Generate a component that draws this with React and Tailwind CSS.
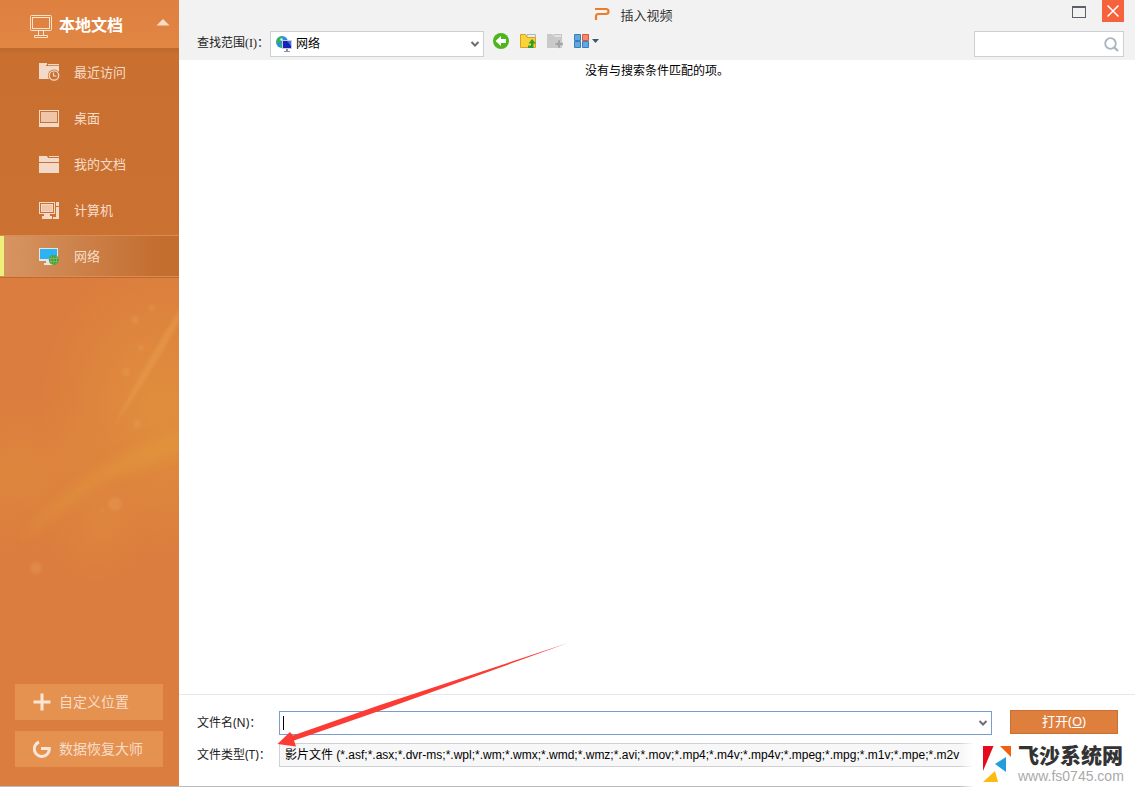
import React, { useState } from 'react'

const places = [
    { id: 'recent', name: '最近访问', Icon: RecentIcon },
    { id: 'desktop', name: '桌面', Icon: DesktopIcon },
    { id: 'docs', name: '我的文档', Icon: FolderIcon },
    { id: 'computer', name: '计算机', Icon: ComputerIcon },
    { id: 'network', name: '网络', Icon: NetworkIcon },
]

const movieTypes = '影片文件 (*.asf;*.asx;*.dvr-ms;*.wpl;*.wm;*.wmx;*.wmd;*.wmz;*.avi;*.mov;*.mp4;*.m4v;*.mp4v;*.mpeg;*.mpg;*.m1v;*.mpe;*.m2v'

function RecentIcon() {
    return (
        <svg width="22" height="20" viewBox="0 0 22 20" fill="#f3d9c8">
            <path d="M0 1h8v2h-1v14H0z" />
            <path d="M9 2h11v1.2H9zM7 4h13v6H10v7H5V4z" />
            <circle cx="15" cy="13.5" r="6" fill="#c97030" />
            <circle cx="15" cy="13.5" r="4.7" fill="none" stroke="#f3d9c8" strokeWidth="1.3" />
            <path d="M14.5 10.5v3.5h3" fill="none" stroke="#f3d9c8" strokeWidth="1.2" />
        </svg>
    )
}

function DesktopIcon() {
    return (
        <svg width="22" height="20" viewBox="0 0 22 20">
            <rect x="0.5" y="2.5" width="19" height="15" fill="none" stroke="#f3d9c8" />
            <rect x="2" y="4" width="16" height="10" fill="#f0c5a8" />
            <path d="M0 15h20v4H0z" fill="#f3d9c8" />
        </svg>
    )
}

function FolderIcon() {
    return (
        <svg width="22" height="20" viewBox="0 0 22 20" fill="#f3d9c8">
            <path d="M0 2h8l1 2h11v4H0zM10 2h10v1H10zM0 9h20v10H0z" />
        </svg>
    )
}

function ComputerIcon() {
    return (
        <svg width="22" height="20" viewBox="0 0 22 20" fill="#f3d9c8">
            <path d="M0 2h16v12H0zM17 2h3v4h-3zM17 7h3v12h-6v-2h3zM5 14h6v2h2v3H3v-3h2z" />
            <rect x="1.5" y="3.5" width="13" height="9" fill="none" stroke="#c97030" />
            <rect x="3" y="5" width="10" height="6" fill="#f0c5a8" />
        </svg>
    )
}

function NetworkIcon() {
    return (
        <svg width="22" height="20" viewBox="0 0 22 20">
            <path d="M0 2h19v13H0z" fill="#e8e4df" />
            <path d="M1 3h17v10H1z" fill="#2bb3f3" />
            <path d="M7 15h5v2h2v2H5v-2h2z" fill="#e8e4df" />
            <circle cx="14.8" cy="14" r="5" fill="#3f9b3a" />
            <path d="M10 12.5h9.6M10 15.5h9.6M14.8 9v10M12.5 10q-1.4 4 0 8M17 10q1.4 4 0 8" fill="none" stroke="#8fc06a" strokeWidth="0.7" />
        </svg>
    )
}

function ChevronIcon({ className }) {
    return (
        <svg className={className} width="10" height="8" viewBox="0 0 10 8">
            <path d="M1.5 2L5 5.5 8.500 2" fill="none" stroke="#6b6e75" strokeWidth="2" />
        </svg>
    )
}

// soft light streaks behind the lower part of the sidebar
function Streaks() {
    return (
        <svg className="pointer-events-none absolute left-0 top-[278px] h-[400px] w-full" viewBox="0 0 179 400" preserveAspectRatio="none">
            <defs>
                <radialGradient id="glow">
                    <stop offset="0" stopColor="#e3983c" stopOpacity="0.65" />
                    <stop offset="1" stopColor="#e3983c" stopOpacity="0" />
                </radialGradient>
                <filter id="soft" x="-20%" y="-20%" width="140%" height="140%">
                    <feGaussianBlur stdDeviation="6" />
                </filter>
                <filter id="soft1">
                    <feGaussianBlur stdDeviation="1.5" />
                </filter>
            </defs>
            <ellipse cx="160" cy="130" rx="120" ry="150" fill="url(#glow)" />
            <ellipse cx="20" cy="195" rx="100" ry="80" fill="url(#glow)" opacity="0.5" />
            <ellipse cx="97" cy="255" rx="50" ry="50" fill="url(#glow)" opacity="0.4" />
            <path d="M190 150Q90 180 20 262Q70 225 100 205Q140 190 190 172z" fill="#e39a3a" opacity="0.5" filter="url(#soft)" />
            <path d="M179 32Q148 80 114 148Q150 98 179 44z" fill="#eaa04d" opacity="0.45" filter="url(#soft1)" />
            <g fill="#eeaa66" opacity="0.25" filter="url(#soft1)">
                <circle cx="115" cy="226" r="7" />
                <circle cx="102" cy="232" r="2" />
                <circle cx="36" cy="290" r="6" />
                <circle cx="126" cy="94" r="4" />
                <circle cx="135" cy="42" r="4" />
                <circle cx="141" cy="70" r="3" />
                <circle cx="152" cy="30" r="3" />
                <circle cx="137" cy="146" r="4" />
            </g>
        </svg>
    )
}

function Sidebar({ place, setPlace }) {
    return (
        <aside className="relative flex w-[179px] shrink-0 flex-col bg-[#db7d3e] font-['Noto_Sans_CJK_SC',sans-serif] text-[#f6dcc8]">
            <Streaks />
            <button type="button" className="flex h-12 items-center bg-linear-to-b from-[#dd8040] to-[#e28644] pl-[30px] text-base font-bold text-white">
                <svg className="mt-1" width="22" height="24" viewBox="0 0 22 24" fill="none" stroke="#fbe3cd">
                    <rect x="0.5" y="1.5" width="21" height="15" rx="1" />
                    <rect x="2.5" y="3.5" width="17" height="11" />
                    <path d="M8.5 17v4M13.5 17v4M4.5 23.500v-2h13v2z" />
                </svg>
                <span className="ml-[7px]">本地文档</span>
                <svg className="mb-1 ml-auto mr-[9px]" width="14" height="8" viewBox="0 0 14 8">
                    <path d="M0.500 7.500L7 1l6.500 6.500z" fill="#f9dcc4" />
                </svg>
            </button>

            <nav className="flex flex-col gap-1 border-b border-[#c06a2d] bg-linear-to-b from-[#be692c] from-0% via-[#c97030] via-3% to-[#cb7232] pt-[3px]">
                {places.map(({ id, name, Icon }) => (
                    <button
                        key={id}
                        type="button"
                        onClick={() => setPlace(id)}
                        className={
                            id === place
                                ? 'flex h-[42px] items-center border-y border-[#d98d55] bg-linear-to-r from-[#d79564] via-[#cb7f46] via-50% to-[#c36d2e] to-90% pl-[39px] text-[13px] shadow-[inset_4px_0_0_#eff07a]'
                                : 'flex h-[42px] items-center pl-[39px] text-[13px]'
                        }
                    >
                        <Icon />
                        <span className="mb-px ml-[13px]">{name}</span>
                    </button>
                ))}
            </nav>

            <div className="relative mt-auto flex flex-col gap-[11px] pb-[19px] pl-[15px] pr-4 text-sm">
                <button type="button" className="flex h-9 items-center bg-[#e59250] pl-[18px]">
                    <svg width="18" height="18" viewBox="0 0 18 18" stroke="#fbe6d6" strokeWidth="3">
                        <path d="M9 0.500v17M0.500 9h17" />
                    </svg>
                    <span className="mb-0.5 ml-2">自定义位置</span>
                </button>
                <button type="button" className="flex h-9 items-center bg-[#e59250] pl-[18px]">
                    <svg width="18" height="18" viewBox="0 0 18 18" fill="none" stroke="#fbe6d6" strokeWidth="3">
                        <path d="M6 2A7.500 7.500 0 1 0 16.300 8.500H8" />
                    </svg>
                    <span className="mb-0.5 ml-2">数据恢复大师</span>
                </button>
            </div>
        </aside>
    )
}

function TitleBar() {
    return (
        <div className="flex h-[31px] items-start">
            <div className="flex h-8 flex-1 items-center justify-center pl-4 text-[13px] text-[#333]">
                <svg className="mb-1" width="16" height="14" viewBox="0 0 16 14">
                    <path d="M1 2h11q2.500 0 2.500 2.500T12 7H4.500Q2 7 2 9.500V13" fill="none" stroke="#ee7a2b" strokeWidth="2.200" />
                </svg>
                <h1 className="ml-[10px]">插入视频</h1>
            </div>
            <button type="button" aria-label="最大化" className="mt-1.5 h-3 w-3.5 border border-t-2 border-[#5b6069]"></button>
            <button type="button" aria-label="关闭" className="ml-4 mr-[11px] flex size-[22px] items-center justify-center bg-[#f5623c]">
                <svg width="12" height="12" viewBox="0 0 12 12" stroke="#fff" strokeWidth="1.500">
                    <path d="M0.500 0.500l11 11M11.500 0.500l-11 11" />
                </svg>
            </button>
        </div>
    )
}

function Toolbar({ place, setPlace }) {
    return (
        <div className="flex h-[26px] items-start">
            <label htmlFor="lookin" className="w-[73px] leading-6">
                查找范围<span className="font-['Liberation_Serif',serif]">(I)</span>：
            </label>
            <div className="flex h-[26px] w-[214px] items-center border border-[#ccd0d5] bg-white pl-[5px] pr-[3px]">
                <svg width="16" height="16" viewBox="0 0 16 16">
                    <circle cx="6" cy="6" r="6" fill="#2a8fe0" />
                    <path d="M3 1.500q3-2 4 0L5 5 1 8Q-0.500 4 3 1.500zM5 7l3 2-1 3-3-1z" fill="#35b545" />
                    <path d="M4 3l2-1 1 2-2 1z" fill="#d5f2ff" />
                    <rect x="6" y="4" width="10" height="9" fill="#c6cfe0" />
                    <rect x="7" y="5" width="8" height="7" fill="#1723b8" />
                    <path d="M11 5h4v5z" fill="#4c6cf0" />
                    <path d="M10 13h2v2h2v1H8v-1h2z" fill="#8b93a3" />
                </svg>
                <select
                    id="lookin"
                    value={place}
                    onChange={e => setPlace(e.target.value)}
                    className="ml-1 h-full flex-1 appearance-none text-black outline-none"
                >
                    {places.map(p => <option key={p.id} value={p.id}>{p.name}</option>)}
                </select>
                <ChevronIcon className="pointer-events-none" />
            </div>

            <div className="ml-[9px] flex gap-[11px] pt-[2px]">
                <button type="button" aria-label="后退">
                    <svg width="16" height="16" viewBox="0 0 16 16">
                        <circle cx="8" cy="8" r="8" fill="#4fb51c" />
                        <path d="M2.500 8L8 3v3h5v4H8v3z" fill="#fff" />
                    </svg>
                </button>
                <button type="button" aria-label="向上一级">
                    <svg width="16" height="16" viewBox="0 0 16 16">
                        <path d="M7 1.500h8.500V5H7z" fill="#e9edf2" stroke="#aeb6bf" />
                        <path d="M0.500 1.500h5l1.500 3h8.500v10H0.500z" fill="#fbd23c" stroke="#d9a41c" />
                        <path d="M12 6l4 4.500h-2.500V15H8v-2.500h3v-2H8.500z" fill="#2f9e2b" />
                    </svg>
                </button>
                <button type="button" aria-label="新建文件夹" disabled>
                    <svg width="16" height="16" viewBox="0 0 16 16">
                        <path d="M7 1.500h7.500V5H7z" fill="#e3e3e3" stroke="#c4c4c4" />
                        <path d="M0 1h5.500L7 4h8v11H0z" fill="#c9c9c9" />
                        <path d="M10.500 7h3v2.500H16v3h-2.500V15h-3v-2.500H8v-3h2.500z" fill="#a3a3a3" stroke="#dedede" strokeWidth="0.500" />
                    </svg>
                </button>
                <button type="button" aria-label="视图" className="flex items-center gap-[3px]">
                    <svg width="15" height="16" viewBox="0 0 15 16">
                        <path d="M0.500 1.500h6v6h-6zM0.500 8.500h6v6h-6zM8.500 8.500h6v6h-6z" fill="#62a7df" stroke="#3a7fbd" />
                        <path d="M8.500 1.500h6v6h-6z" fill="#f28a70" stroke="#df5538" />
                    </svg>
                    <svg width="7" height="4" viewBox="0 0 7 4">
                        <path d="M0 0h7L3.500 4z" fill="#3f5672" />
                    </svg>
                </button>
            </div>

            <div className="ml-auto mr-[11px] flex h-[26px] w-[150px] items-center border border-[#ccd0d5] bg-white pr-1">
                <input type="search" aria-label="搜索" className="h-full min-w-0 flex-1 appearance-none pl-1 outline-none" />
                <svg width="15" height="15" viewBox="0 0 15 15" fill="none" stroke="#a9b4c1">
                    <circle cx="6.500" cy="6.500" r="5.300" strokeWidth="1.800" />
                    <path d="M10.500 10.500l3.500 3.500" strokeWidth="2.200" />
                </svg>
            </div>
        </div>
    )
}

function Watermark() {
    return (
        <div className="absolute -bottom-px right-0 flex h-[45px] w-[175px] items-start bg-linear-to-r from-white/0 to-white to-8% pl-[23px]">
            <svg className="mt-[3px] shrink-0" width="29" height="38" viewBox="0 0 29 38">
                <path d="M0 1h10.500L0 26z" fill="#e60b1c" />
                <path d="M17 1h11v11z" fill="#f0600f" />
                <path d="M23 12v15L12 19z" fill="#229fdb" />
                <path d="M12 26l3 11H0z" fill="#fdbb0e" />
            </svg>
            <div className="ml-[6px] font-['Liberation_Sans','Noto_Sans_CJK_SC',sans-serif]">
                <p className="text-[21px] font-black leading-7 text-[#333]">飞沙系统网</p>
                <p className="text-sm leading-3 text-[#aaa]">www.fs0745.com</p>
            </div>
        </div>
    )
}

function FileForm() {
    const [fileName, setFileName] = useState('')

    return (
        <form onSubmit={e => e.preventDefault()} className="relative flex items-start border-t border-[#e6e8ea] pb-[19px] pl-[18px] pr-[17px] pt-4">
            <div className="flex min-w-0 flex-1 flex-col gap-2">
                <div className="flex h-6 items-center">
                    <label htmlFor="filename" className="w-[82px] shrink-0">文件名(N)：</label>
                    <div className="flex h-full flex-1 items-center border border-[#7a9ccf] bg-white pl-[3px] pr-[3px]">
                        <span className="h-3.5 w-px bg-black"></span>
                        <input
                            id="filename"
                            type="text"
                            value={fileName}
                            onChange={e => setFileName(e.target.value)}
                            className="h-full min-w-0 flex-1 pl-px outline-none"
                        />
                        <ChevronIcon />
                    </div>
                </div>
                <div className="flex h-6 items-center">
                    <label htmlFor="filetype" className="w-[82px] shrink-0">文件类型(T)：</label>
                    <select
                        id="filetype"
                        className="h-full min-w-0 flex-1 appearance-none border border-[#cfd1d3] bg-[#f7f7f7] pl-[5px] font-['Liberation_Sans','Noto_Sans_CJK_SC',sans-serif] text-black"
                    >
                        <option>{movieTypes}</option>
                    </select>
                </div>
            </div>
            <button type="submit" className="-mt-px ml-[18px] h-6 w-[108px] border border-[#cb6f33] bg-[#df7f3e] text-[13px] text-white">
                打开(<u>O</u>)
            </button>

            <svg className="pointer-events-none absolute -top-[53px] left-[98px]" width="292" height="106" viewBox="0 0 292 106">
                <path d="M0.500 102L13 90l3 3.500Q60 78 103 63L291 1 105 68Q62 83 17 98.500l2 6z" fill="#fb3b34" />
            </svg>
            <Watermark />
        </form>
    )
}

export default function App() {
    const [place, setPlace] = useState('network')

    return (
        <div className="flex min-h-screen border-b border-[#b9bdbd] bg-white text-xs text-[#222]">
            <Sidebar place={place} setPlace={setPlace} />
            <main className="flex min-w-0 flex-1 flex-col font-['Noto_Sans','Noto_Sans_CJK_SC',sans-serif]">
                <header className="bg-[#f2f2f2] pb-[3px]">
                    <TitleBar />
                    <div className="pl-[18px]">
                        <Toolbar place={place} setPlace={setPlace} />
                    </div>
                </header>
                <p className="flex-1 pt-[3px] text-center text-black">没有与搜索条件匹配的项。</p>
                <FileForm />
            </main>
        </div>
    )
}
